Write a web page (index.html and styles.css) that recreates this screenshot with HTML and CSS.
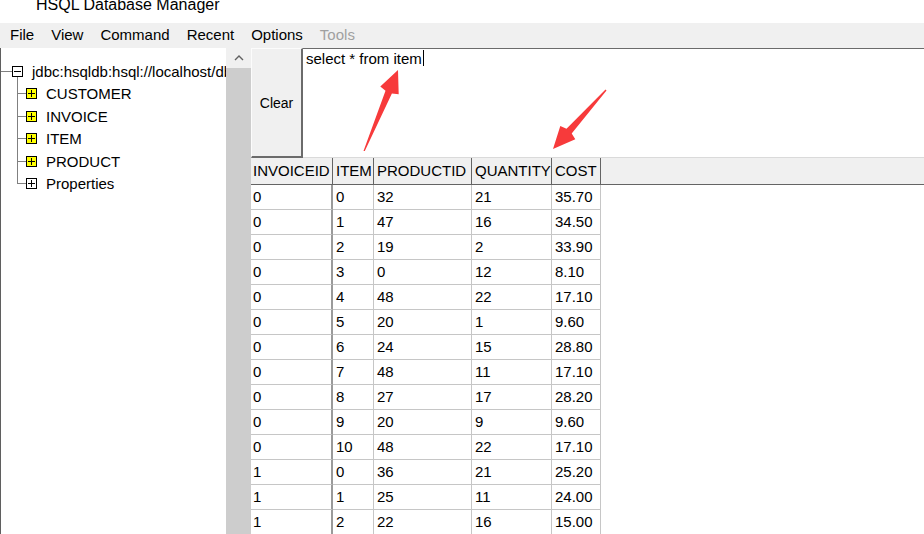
FILE: index.html
```html
<!DOCTYPE html>
<html>
<head>
<meta charset="utf-8">
<title>HSQL Database Manager</title>
<link rel="stylesheet" href="styles.css">
</head>
<body>
<div class="app">
  <div class="titlebar"><span class="title">HSQL Database Manager</span></div>
  <div class="menubar">
    <span>File</span><span>View</span><span>Command</span><span>Recent</span><span>Options</span><span class="disabled">Tools</span>
  </div>
  <div class="main">
    <div class="tree">
      <div class="node"><span class="hline"></span><span class="box"></span><span class="label">jdbc:hsqldb:hsql://localhost/db</span></div>
      <div class="children">
        <div class="node"><span class="hline"></span><span class="box plus table"></span><span class="label">CUSTOMER</span></div>
        <div class="node"><span class="hline"></span><span class="box plus table"></span><span class="label">INVOICE</span></div>
        <div class="node"><span class="hline"></span><span class="box plus table"></span><span class="label">ITEM</span></div>
        <div class="node"><span class="hline"></span><span class="box plus table"></span><span class="label">PRODUCT</span></div>
        <div class="node"><span class="hline"></span><span class="box plus"></span><span class="label">Properties</span></div>
      </div>
    </div>
    <div class="scrollbar">
      <div class="sb-up"><svg width="10" height="6" viewBox="0 0 10 6"><path d="M1 5 L5 1 L9 5" fill="none" stroke="#606060" stroke-width="1.4"/></svg></div>
      <div class="sb-thumb"></div>
    </div>
    <div class="right">
      <div class="query">
        <div class="clear">Clear</div>
        <div class="editor">select * from item<span class="caret"></span></div>
      </div>
      <div class="thead">
        <div class="cell c1">INVOICEID</div><div class="cell c2">ITEM</div><div class="cell c3">PRODUCTID</div><div class="cell c4">QUANTITY</div><div class="cell c5">COST</div>
      </div>
      <div class="tbody">
        <div class="row"><div class="cell c1">0</div><div class="cell c2">0</div><div class="cell c3">32</div><div class="cell c4">21</div><div class="cell c5">35.70</div></div>
        <div class="row"><div class="cell c1">0</div><div class="cell c2">1</div><div class="cell c3">47</div><div class="cell c4">16</div><div class="cell c5">34.50</div></div>
        <div class="row"><div class="cell c1">0</div><div class="cell c2">2</div><div class="cell c3">19</div><div class="cell c4">2</div><div class="cell c5">33.90</div></div>
        <div class="row"><div class="cell c1">0</div><div class="cell c2">3</div><div class="cell c3">0</div><div class="cell c4">12</div><div class="cell c5">8.10</div></div>
        <div class="row"><div class="cell c1">0</div><div class="cell c2">4</div><div class="cell c3">48</div><div class="cell c4">22</div><div class="cell c5">17.10</div></div>
        <div class="row"><div class="cell c1">0</div><div class="cell c2">5</div><div class="cell c3">20</div><div class="cell c4">1</div><div class="cell c5">9.60</div></div>
        <div class="row"><div class="cell c1">0</div><div class="cell c2">6</div><div class="cell c3">24</div><div class="cell c4">15</div><div class="cell c5">28.80</div></div>
        <div class="row"><div class="cell c1">0</div><div class="cell c2">7</div><div class="cell c3">48</div><div class="cell c4">11</div><div class="cell c5">17.10</div></div>
        <div class="row"><div class="cell c1">0</div><div class="cell c2">8</div><div class="cell c3">27</div><div class="cell c4">17</div><div class="cell c5">28.20</div></div>
        <div class="row"><div class="cell c1">0</div><div class="cell c2">9</div><div class="cell c3">20</div><div class="cell c4">9</div><div class="cell c5">9.60</div></div>
        <div class="row"><div class="cell c1">0</div><div class="cell c2">10</div><div class="cell c3">48</div><div class="cell c4">22</div><div class="cell c5">17.10</div></div>
        <div class="row"><div class="cell c1">1</div><div class="cell c2">0</div><div class="cell c3">36</div><div class="cell c4">21</div><div class="cell c5">25.20</div></div>
        <div class="row"><div class="cell c1">1</div><div class="cell c2">1</div><div class="cell c3">25</div><div class="cell c4">11</div><div class="cell c5">24.00</div></div>
        <div class="row"><div class="cell c1">1</div><div class="cell c2">2</div><div class="cell c3">22</div><div class="cell c4">16</div><div class="cell c5">15.00</div></div>
      </div>
    </div>
  </div>
  <svg class="annot" width="924" height="534" viewBox="0 0 924 534">
    <polygon fill="#f73a3b" points="363.5,151 385.5,90.7 380.3,86.4 398,70 398.7,94.2 391.9,93.5 364.8,151"/>
    <polygon fill="#f73a3b" points="606.5,90.5 571.7,133.5 575.3,139.3 553,149 560.3,125.9 566.5,128.8 605.5,89.5"/>
  </svg>
</div>
</body>
</html>
```
FILE: styles.css
```css
* { box-sizing: border-box; }
body {
  margin: 0;
  width: 924px;
  height: 534px;
  overflow: hidden;
  background: #fff;
  font-family: "Liberation Sans", Arial, sans-serif;
  color: #000;
}
.app {
  position: relative;
  width: 924px;
  height: 534px;
  display: flex;
  flex-direction: column;
}
.titlebar {
  height: 23px;
  flex: none;
  background: #fff;
  padding-left: 36px;
  overflow: hidden;
}
.title {
  display: block;
  font-size: 16px;
  line-height: 16px;
  margin-top: -3px;
}
.menubar {
  height: 25px;
  flex: none;
  background: #f0f0f0;
  display: flex;
  gap: 17px;
  padding-left: 10px;
  font-size: 15px;
  line-height: 23px;
}
.menubar .disabled { color: #a0a0a0; }
.main {
  flex: 1;
  min-height: 0;
  display: flex;
}
.tree {
  width: 226px;
  flex: none;
  border-left: 1px solid #5f5f5f;
  background: #fff;
  padding-top: 12px;
  overflow: hidden;
  white-space: nowrap;
  font-size: 15px;
}
.node {
  display: flex;
  align-items: center;
  height: 22.5px;
}
.hline {
  width: 11px;
  flex: none;
  border-top: 1px solid #808080;
}
.children .hline { width: 9px; }
.box {
  width: 11px;
  height: 11px;
  flex: none;
  border: 1px solid #000;
  background: #fff;
  position: relative;
}
.box::before {
  content: "";
  position: absolute;
  left: 1px;
  right: 1px;
  top: 4px;
  height: 1px;
  background: #000;
}
.box.plus::after {
  content: "";
  position: absolute;
  top: 1px;
  bottom: 1px;
  left: 4px;
  width: 1px;
  background: #000;
}
.box.table { background: #ffff00; }
.label { margin-left: 9px; }
.children {
  margin-left: 16px;
  position: relative;
}
.children::before {
  content: "";
  position: absolute;
  left: 0;
  top: -6px;
  bottom: 11px;
  border-left: 1px solid #808080;
}
.scrollbar {
  width: 25px;
  flex: none;
  display: flex;
  flex-direction: column;
  background: #cdcdcd;
}
.sb-up {
  height: 20px;
  flex: none;
  background: #f0f0f0;
  display: flex;
  align-items: center;
  justify-content: center;
}
.sb-thumb { flex: 1; background: #cdcdcd; }
.right {
  flex: 1;
  min-width: 0;
  display: flex;
  flex-direction: column;
}
.query {
  height: 110px;
  flex: none;
  display: flex;
}
.clear {
  width: 52px;
  flex: none;
  background: #f0f0f0;
  border-top: 1px solid #fcfcfc;
  border-left: 1px solid #fcfcfc;
  border-right: 2px solid #6b6b6b;
  border-bottom: 2px solid #6b6b6b;
  display: flex;
  align-items: center;
  justify-content: center;
  font-size: 14px;
}
.editor {
  flex: 1;
  background: #fff;
  border-top: 1px solid #6b6b6b;
  border-bottom: 1px solid #dadada;
  padding: 1px 0 0 3px;
  font-size: 15px;
  line-height: 17px;
  white-space: nowrap;
}
.caret {
  display: inline-block;
  width: 1px;
  height: 16px;
  margin-left: 1px;
  background: #000;
  vertical-align: top;
}
.thead {
  height: 27px;
  flex: none;
  display: flex;
  background: #f0f0f0;
  border-bottom: 1px solid #646464;
  font-size: 15px;
  line-height: 26px;
}
.cell {
  padding-left: 3px;
  white-space: nowrap;
  overflow: hidden;
}
.c1 { width: 82px; padding-left: 2px; }
.c2 { width: 41px; }
.c3 { width: 98px; }
.c4 { width: 80px; }
.c5 { width: 49px; }
.thead .cell { border-right: 1px solid #646464; }
.tbody { font-size: 15px; }
.row {
  display: flex;
  height: 25px;
}
.row .cell {
  line-height: 24px;
  border-right: 1px solid #c6c6c6;
  border-bottom: 1px solid #c6c6c6;
}
.row .c1 { border-right: 2px solid #9a9a9a; }
.annot {
  position: absolute;
  left: 0;
  top: 0;
  pointer-events: none;
}
```
